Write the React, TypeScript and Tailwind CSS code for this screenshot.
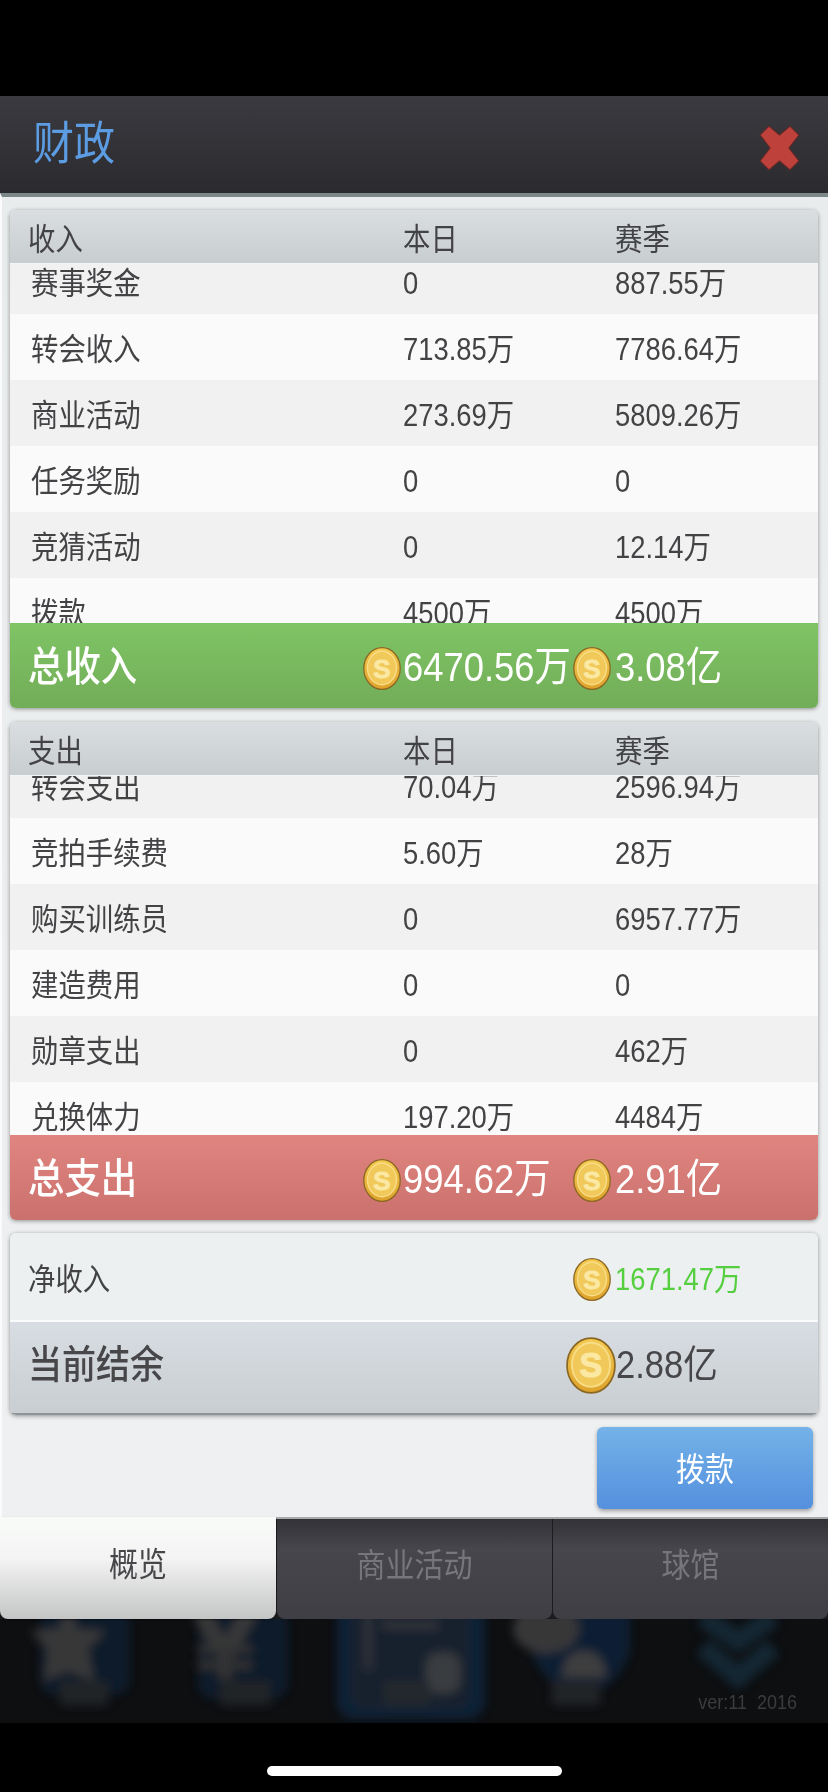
import React, { useId } from "react";

function T({ children, className = "" }: { children: React.ReactNode; className?: string }) {
  return <span className={"inline-block scale-y-[1.12] whitespace-pre " + className}>{children}</span>;
}

function Coin({ w = 38, h = 43 }: { w?: number; h?: number }) {
  const id = useId();
  return (
    <svg width={w} height={h} viewBox="0 0 38 43" className="shrink-0">
      <defs>
        <linearGradient id={id} x1="0" y1="0" x2="0" y2="1">
          <stop offset="0" stopColor="#f6cb50" />
          <stop offset="1" stopColor="#dda22c" />
        </linearGradient>
      </defs>
      <ellipse cx="19" cy="21.5" rx="18.2" ry="20.8" fill={"url(#" + id + ")"} stroke="#8a6722" strokeWidth="1.3" />
      <ellipse cx="19" cy="21" rx="14.5" ry="16.8" fill="#f0c95a" stroke="#f8dd88" strokeWidth="1.4" />
      <text x="19" y="30.5" textAnchor="middle" fontSize="26" fontWeight="700" fontFamily="Liberation Sans, sans-serif" fill="#fbe8a2" stroke="#fbe8a2" strokeWidth="0.9">
        S
      </text>
    </svg>
  );
}

function Row({ a, b, c, alt }: { a: string; b: string; c: string; alt: boolean }) {
  return (
    <div className={"flex h-[66px] items-center pl-[21px] pt-[6px] text-[27.4px] leading-none text-[#434346] " + (alt ? "bg-[#f1f1f1]" : "bg-[#fafafa]")}>
      <div className="w-[372px]"><T>{a}</T></div>
      <div className="w-[212px]"><T>{b}</T></div>
      <div><T>{c}</T></div>
    </div>
  );
}

function Table({
  title,
  rows,
  offset,
  total,
  day,
  season,
  green,
}: {
  title: string;
  rows: string[][];
  offset: string;
  total: string;
  day: string;
  season: string;
  green: boolean;
}) {
  return (
    <div className="ml-[10px] w-[808px] overflow-hidden rounded-[6px] shadow-[0_1px_4px_rgba(0,0,0,0.4)]">
      <div className="flex h-[53px] items-center bg-linear-to-b from-[#dadee0] to-[#c8cdd0] pl-[18px] pt-[6px] text-[27.4px] leading-none text-[#434346]">
        <div className="w-[375px]"><T>{title}</T></div>
        <div className="w-[212px]"><T>本日</T></div>
        <div><T>赛季</T></div>
      </div>
      <div className="h-[360px] overflow-hidden border-t border-[#f4f5f5]">
        <div className={offset}>
          {rows.map((r, i) => (
            <Row key={r[0]} a={r[0]} b={r[1]} c={r[2]} alt={i % 2 === 0} />
          ))}
        </div>
      </div>
      <div
        className={
          "flex h-[85px] items-center pl-[18px] pt-[5px] text-[36.4px] leading-none text-white bg-linear-to-b " +
          (green ? "from-[#7fc465] to-[#72ad58]" : "from-[#e08580] to-[#cb716d]")
        }
      >
        <div className="w-[335px] font-medium"><T>{total}</T></div>
        <Coin />
        <div className="ml-[2px] w-[170px]"><T>{day}</T></div>
        <Coin />
        <div className="ml-[4px]"><T>{season}</T></div>
      </div>
    </div>
  );
}

const income = [
  ["赛事奖金", "0", "887.55万"],
  ["转会收入", "713.85万", "7786.64万"],
  ["商业活动", "273.69万", "5809.26万"],
  ["任务奖励", "0", "0"],
  ["竞猜活动", "0", "12.14万"],
  ["拨款", "4500万", "4500万"],
];

const expense = [
  ["转会支出", "70.04万", "2596.94万"],
  ["竞拍手续费", "5.60万", "28万"],
  ["购买训练员", "0", "6957.77万"],
  ["建造费用", "0", "0"],
  ["勋章支出", "0", "462万"],
  ["兑换体力", "197.20万", "4484万"],
];

function Backdrop() {
  return (
    <svg width="828" height="104" viewBox="0 0 828 104" className="absolute left-0 top-0">
      <defs>
        <filter id="soft" x="-5%" y="-20%" width="110%" height="140%">
          <feGaussianBlur stdDeviation="5" />
        </filter>
      </defs>
      <g filter="url(#soft)" opacity="0.68">
        <rect x="40" y="-12" width="90" height="88" rx="16" fill="#0c2238" />
        <polygon points="68,-12 78,10 106,12 88,30 94,62 68,52 44,62 48,30 30,12 58,10" fill="#4c4c4c" />
        <rect x="60" y="62" width="48" height="24" fill="#2c2e32" />

        <rect x="198" y="-12" width="90" height="92" rx="16" fill="#0c2238" />
        <path d="M200 -8 L225 35 L250 -8" stroke="#4c4c4c" strokeWidth="17" fill="none" />
        <rect x="198" y="26" width="54" height="8" fill="#444" />
        <rect x="198" y="42" width="54" height="8" fill="#444" />
        <rect x="218" y="30" width="14" height="30" fill="#444" />
        <rect x="220" y="62" width="50" height="24" fill="#2c2e32" />

        <rect x="337" y="-20" width="148" height="120" rx="18" fill="#10294a" />
        <rect x="350" y="-20" width="120" height="110" rx="14" fill="#1a2b3e" />
        <rect x="365" y="-10" width="6" height="60" fill="#444a50" />
        <path d="M380 -12 h60 M382 6 h56" stroke="#484c50" strokeWidth="6" />
        <rect x="426" y="34" width="34" height="40" rx="12" fill="#505356" />
        <rect x="384" y="62" width="46" height="24" fill="#2f363e" />

        <path d="M530 -12 H630 V30 Q625 60 580 84 Q540 60 530 30 Z" fill="#0c2645" />
        <ellipse cx="546" cy="10" rx="33" ry="24" fill="#4c4c4c" />
        <path d="M562 58 Q564 32 583 32 Q604 32 606 58 Z" fill="#555" />
        <rect x="552" y="62" width="48" height="24" fill="#2c2e32" />

        <path d="M703 -2 L738 22 L773 -2" stroke="#123042" strokeWidth="20" fill="none" />
        <path d="M703 28 L738 58 L773 28" stroke="#123042" strokeWidth="20" fill="none" />
      </g>
    </svg>
  );
}

export default function App() {
  return (
    <div className="flex h-[1792px] w-[828px] flex-col overflow-hidden bg-black font-['Liberation_Sans','Noto_Sans_CJK_SC',sans-serif]">
      <div className="h-[96px] shrink-0" />

      <div className="flex h-[97px] shrink-0 items-center justify-between bg-linear-to-b from-[#3a3a40] to-[#2b2b2f] pl-[33px] pr-[28px]">
        <div className="mb-[2px] text-[41px] leading-none text-[#5c9ce2]"><T>财政</T></div>
        <svg width="41" height="46" viewBox="0 0 41 46" className="mt-[6px]">
          <polygon
            points="10,1 20.5,10 31,1 40,10 30,23 40,36 31,45 20.5,36 10,45 1,36 11,23 1,10"
            fill="#bf413b"
            stroke="#5f2a28"
            strokeWidth="1.2"
          />
        </svg>
      </div>

      <div className="flex grow flex-col border-b-2 border-l-2 border-t-4 border-b-[#a9aaab] border-l-[#fbfbfb] border-t-[#7c8788] bg-linear-to-b from-[#e9ecec] to-[#eef0f1] pt-[13px]">
        <div className="-ml-[2px]">
          <Table title="收入" rows={income} offset="-mt-[16px]" total="总收入" day="6470.56万" season="3.08亿" green />
          <div className="h-[14px]" />
          <Table title="支出" rows={expense} offset="-mt-[24px]" total="总支出" day="994.62万" season="2.91亿" green={false} />

          <div className="ml-[10px] mt-[13px] w-[808px] overflow-hidden rounded-[6px] shadow-[0_1px_4px_rgba(0,0,0,0.4)]">
            <div className="flex h-[89px] items-center border-b-2 border-[#fafbfb] bg-[#edf0f1] pl-[18px] pt-[6px] text-[27.4px] leading-none text-[#434346]">
              <div className="w-[545px]"><T>净收入</T></div>
              <Coin />
              <div className="ml-[4px] text-[#55cf3f]"><T>1671.47万</T></div>
            </div>
            <div className="flex h-[93px] items-center border-b-2 border-[#8f9498] bg-linear-to-b from-[#d8dde3] to-[#c9ced2] pb-[5px] pl-[18px] text-[#47474a]">
              <div className="w-[538px] text-[34px] font-medium leading-none"><T>当前结余</T></div>
              <Coin w={50} h={57} />
              <div className="text-[34.5px] leading-none"><T>2.88亿</T></div>
            </div>
          </div>
        </div>

        <div className="mr-[15px] mt-[12px] flex h-[82px] w-[216px] shrink-0 items-center justify-center self-end rounded-[6px] bg-linear-to-b from-[#74b2e8] to-[#5590de] pt-[4px] text-[29px] leading-none text-white shadow-[0_2px_4px_rgba(0,0,0,0.35)]">
          <T>拨款</T>
        </div>
      </div>

      <div className="flex h-[273px] shrink-0 flex-col">
        <div className="relative z-10 flex h-[100px] shrink-0 gap-[1px] bg-[#1c1c1e] text-[29px] leading-none">
          <div className="-mt-[2px] flex h-[102px] w-[276px] items-center justify-center rounded-b-[8px] bg-linear-to-b from-[#f9fbf9] via-[#f3f4f3] via-40% to-[#c4c6c5] pb-[5px] text-[#47474a] shadow-[0_1px_2px_rgba(0,0,0,0.4)]">
            <T>概览</T>
          </div>
          <div className="flex h-[100px] w-[275px] items-center justify-center rounded-b-[8px] bg-linear-to-b from-[#333237] via-[#47464c] via-30% to-[#3f3e44] pb-[5px] text-[#77777b]">
            <T>商业活动</T>
          </div>
          <div className="flex h-[100px] w-[275px] items-center justify-center rounded-b-[8px] bg-linear-to-b from-[#333237] via-[#47464c] via-30% to-[#3f3e44] pb-[5px] text-[#77777b]">
            <T>球馆</T>
          </div>
        </div>
        <div className="relative flex h-[104px] shrink-0 items-end justify-end bg-[#0e0f11] pb-[12px] pr-[31px]">
          <Backdrop />
          <div className="relative text-[18px] leading-none text-[#3c3c3e] blur-[0.5px]"><T>ver:11  2016</T></div>
        </div>
        <div className="flex grow justify-center bg-black pt-[43px]">
          <div className="h-[10px] w-[295px] rounded-full bg-white" />
        </div>
      </div>
    </div>
  );
}
